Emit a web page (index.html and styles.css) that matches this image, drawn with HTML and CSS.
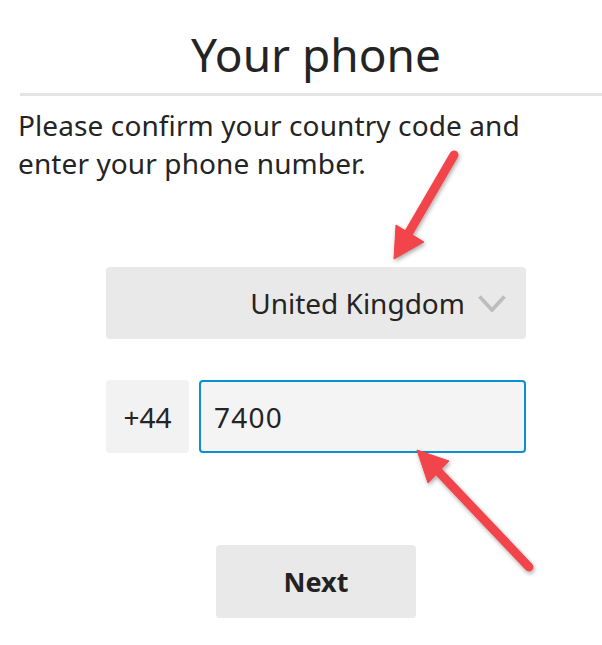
FILE: index.html
```html
<!DOCTYPE html>
<html lang="en">
<head>
<meta charset="utf-8">
<title>Your phone</title>
<link rel="stylesheet" href="styles.css">
</head>
<body>
<div class="page">
  <h1 class="title">Your phone</h1>
  <div class="rule"></div>
  <p class="intro">Please confirm your country code and<br>enter your phone number.</p>
  <div class="form">
    <div class="select">
      <span class="select-label">United Kingdom</span>
      <svg class="chevron" width="28" height="17" viewBox="0 0 28 17"><polyline points="1.5,1.5 14,15 26.5,1.5" fill="none" stroke="#bdbdbd" stroke-width="3.8" stroke-linejoin="miter"/></svg>
    </div>
    <div class="phone-row">
      <div class="code">+44</div>
      <div class="number">7400</div>
    </div>
    <div class="actions">
      <button class="next">Next</button>
    </div>
  </div>
  <svg class="arrows" width="602" height="645" viewBox="0 0 602 645">
    <defs>
      <filter id="sh" x="-20%" y="-20%" width="140%" height="140%">
        <feDropShadow dx="1" dy="2" stdDeviation="2" flood-color="#000" flood-opacity="0.35"/>
      </filter>
    </defs>
    <g filter="url(#sh)" fill="#f2444b" stroke="#f2444b">
      <line x1="454" y1="155" x2="408" y2="234" stroke-width="9" stroke-linecap="round"/>
      <polygon points="394,259 396,225 424,242" stroke-width="1" stroke-linejoin="round"/>
      <line x1="529" y1="567" x2="436" y2="469" stroke-width="9" stroke-linecap="round"/>
      <polygon points="417,450 449,461 428,483" stroke-width="1" stroke-linejoin="round"/>
    </g>
  </svg>
</div>
</body>
</html>
```

FILE: styles.css
```css
html, body {
  margin: 0;
  padding: 0;
  background: #ffffff;
}
.page {
  position: relative;
  width: 602px;
  height: 645px;
  overflow: hidden;
  font-family: "Noto Sans", "Open Sans", sans-serif;
  color: #242424;
}
.title {
  box-sizing: border-box;
  margin: 26px 0 0 0;
  padding-left: 30px;
  width: 602px;
  text-align: center;
  font-size: 46px;
  line-height: 56px;
  font-weight: 400;
}
.rule {
  margin: 11px 0 0 20px;
  height: 3px;
  background: #e4e4e4;
}
.intro {
  margin: 10px 0 0 18px;
  font-size: 28px;
  line-height: 38px;
  letter-spacing: 0.1px;
}
.form {
  margin: 85px 0 0 106px;
  width: 420px;
  display: flex;
  flex-direction: column;
}
.select {
  height: 72px;
  background: #e9e9e9;
  border-radius: 4px;
  display: flex;
  align-items: center;
  justify-content: flex-end;
  gap: 13px;
  padding-right: 20px;
  font-size: 28px;
  line-height: 34px;
}
.chevron {
  display: block;
}
.phone-row {
  margin-top: 41px;
  display: flex;
  gap: 10px;
  height: 73px;
}
.code {
  width: 83px;
  background: #f2f2f2;
  border-radius: 4px;
  display: flex;
  align-items: center;
  justify-content: center;
  font-size: 28px;
  line-height: 34px;
}
.number {
  flex: 1;
  box-sizing: border-box;
  border: 2px solid #0a8fd1;
  border-radius: 4px;
  background: #f4f4f4;
  display: flex;
  align-items: center;
  padding-left: 13px;
  font-size: 28px;
  line-height: 34px;
  letter-spacing: 1.2px;
}
.actions {
  margin-top: 92px;
  display: flex;
  justify-content: center;
}
.next {
  width: 200px;
  height: 73px;
  border: none;
  border-radius: 4px;
  background: #e9e9e9;
  font-family: "Noto Sans", "Open Sans", sans-serif;
  font-weight: 700;
  font-size: 27px;
  line-height: 34px;
  color: #222;
  padding: 0;
}
.arrows {
  position: absolute;
  left: 0;
  top: 0;
  pointer-events: none;
}
```
